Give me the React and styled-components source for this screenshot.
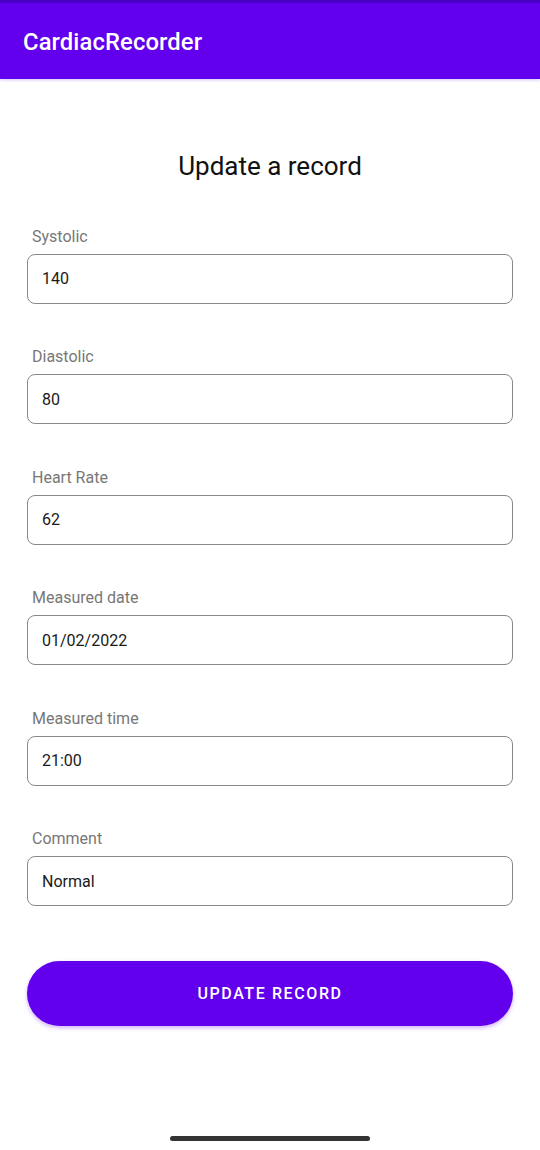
import React from "react";
import styled, { createGlobalStyle } from "styled-components";

const Global = createGlobalStyle`
  html, body { margin: 0; padding: 0; background: #fff; }
  body { font-family: Roboto, "Noto Sans", sans-serif; }
`;

const Screen = styled.div`
  width: 540px;
  height: 1150px;
  display: flex;
  flex-direction: column;
  background: #fff;
`;

const AppBar = styled.header`
  height: 79px;
  background: #6200ee;
  border-top: 3px solid #4a00c4;
  display: flex;
  align-items: center;
  padding: 2px 23px 0;
  box-shadow: 0 1px 3px rgba(98, 0, 238, 0.25);
  color: #fff;
  font-size: 23.8px;
  font-weight: 500;
  letter-spacing: 0.1px;
  box-sizing: border-box;
`;

const Body = styled.main`
  flex: 1;
  display: flex;
  flex-direction: column;
  padding: 0 27px;
`;

const Heading = styled.h1`
  margin: 70px 0 0;
  height: 35px;
  line-height: 35px;
  text-align: center;
  font-size: 26px;
  font-weight: 400;
  color: #111;
`;

const Form = styled.div`
  display: flex;
  flex-direction: column;
  gap: 42.5px;
  margin-top: 41.5px;
`;

const Field = styled.div`
  display: flex;
  flex-direction: column;
`;

const Label = styled.label`
  padding-left: 5px;
  font-size: 16px;
  line-height: 22px;
  color: #777;
  margin-bottom: 6px;
`;

const Input = styled.div`
  height: 50px;
  box-sizing: border-box;
  border: 1px solid #888;
  border-radius: 8px;
  display: flex;
  align-items: center;
  padding-left: 14px;
  font-size: 16px;
  color: #1a1a1a;
`;

const Button = styled.button`
  margin-top: 55px;
  height: 65px;
  border: none;
  border-radius: 33px;
  background: #6200ee;
  color: #fff;
  font-family: Roboto, sans-serif;
  font-size: 16px;
  font-weight: 500;
  letter-spacing: 1.6px;
  box-shadow: 0 2px 4px rgba(98, 0, 238, 0.3);
`;

const Spacer = styled.div`
  flex: 1;
`;

const HomeBar = styled.div`
  width: 200px;
  height: 5px;
  border-radius: 3px;
  background: #333;
  align-self: center;
  margin-bottom: 9px;
`;

const fields = [
  ["Systolic", "140"],
  ["Diastolic", "80"],
  ["Heart Rate", "62"],
  ["Measured date", "01/02/2022"],
  ["Measured time", "21:00"],
  ["Comment", "Normal"],
];

export default function App() {
  return (
    <>
      <Global />
      <Screen>
        <AppBar>CardiacRecorder</AppBar>
        <Body>
          <Heading>Update a record</Heading>
          <Form>
            {fields.map(([l, v]) => (
              <Field key={l}>
                <Label>{l}</Label>
                <Input>{v}</Input>
              </Field>
            ))}
          </Form>
          <Button>UPDATE RECORD</Button>
        </Body>
        <Spacer />
        <HomeBar />
      </Screen>
    </>
  );
}
